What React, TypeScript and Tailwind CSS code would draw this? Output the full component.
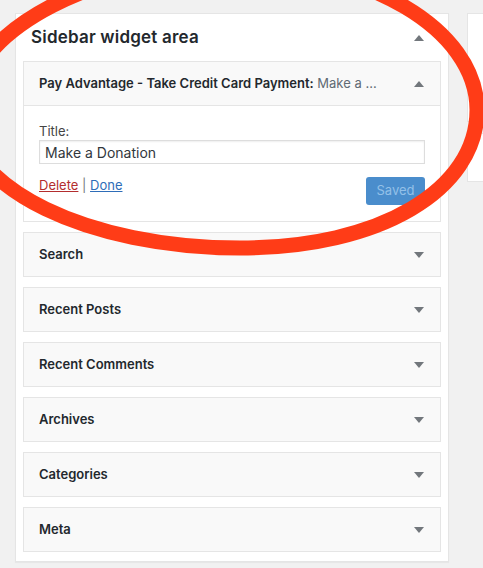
import React from 'react';

const font = { fontFamily: 'Inter, "Liberation Sans", sans-serif' };

const Arrow = ({ up }: { up?: boolean }) => (
  <svg width="10" height="6" viewBox="0 0 10 6" className="shrink-0">
    <path d={up ? 'M5 0 L10 6 L0 6 Z' : 'M0 0 L10 0 L5 6 Z'} fill="#72777c" />
  </svg>
);

const widgets = ['Search', 'Recent Posts', 'Recent Comments', 'Archives', 'Categories', 'Meta'];

const Collapsed = ({ title }: { title: string }) => (
  <div className="h-[45px] border border-[#e5e5e5] bg-[#f9f9f9] flex items-center justify-between pl-[15px] pr-[16px]">
    <span className="text-[13px] font-semibold text-[#23282d]">{title}</span>
    <Arrow />
  </div>
);

export default function App() {
  return (
    <div className="relative w-[483px] h-[568px] overflow-hidden bg-[#f1f1f1] flex gap-[18px] pt-[13px] pl-[15px]" style={font}>
      <div className="shrink-0 w-[434px] h-fit bg-white border border-[#e5e5e5] px-[7px] pb-[9px] shadow-[0_1px_1px_rgba(0,0,0,0.04)]">
        <div className="h-[47px] flex items-center justify-between pl-[8px] pr-[17px]">
          <h2 className="text-[17px] font-semibold text-[#23282d] tracking-[0.2px]">Sidebar widget area</h2>
          <Arrow up />
        </div>
        <div className="flex flex-col gap-[10px]">
          <div className="border border-[#e5e5e5] bg-white">
            <div className="h-[44px] bg-[#f9f9f9] border-b border-[#e5e5e5] flex items-center justify-between pl-[15px] pr-[16px]">
              <span className="text-[13px] font-semibold text-[#23282d] whitespace-nowrap">
                Pay Advantage - Take Credit Card Payment:<span className="font-normal text-[#606a73]"> Make a ...</span>
              </span>
              <Arrow up />
            </div>
            <div className="px-[15px] pt-[17px] pb-[16px]">
              <label className="block text-[13px] leading-[16px] text-[#444]">Title:</label>
              <input
                readOnly
                value="Make a Donation"
                className="mt-[1px] w-full h-[24px] border border-[#ddd] px-[5px] text-[14px] text-[#32373c] outline-none shadow-[inset_0_1px_2px_rgba(0,0,0,0.07)]"
                style={font}
              />
              <div className="flex justify-between items-start mt-[13px]">
                <div className="text-[13px] leading-[16px] text-[#72777c]">
                  <a className="text-[#b32d2e] underline">Delete</a> | <a className="text-[#2e6db8] underline">Done</a>
                </div>
                <button className="w-[59px] h-[28px] rounded-[3px] bg-[#4a8dcc] text-[13px] text-[#93c0e8]">Saved</button>
              </div>
            </div>
          </div>
          {widgets.map((w) => (
            <Collapsed key={w} title={w} />
          ))}
        </div>
      </div>
      <div className="shrink-0 flex flex-col gap-[11px] w-[40px]">
        <div className="h-[109px] bg-white border border-[#e5e5e5]" />
        <div className="h-[49px] bg-white border border-[#e5e5e5]" />
      </div>
      {/* hand-drawn red loop over the widget */}
      <svg className="absolute inset-0 pointer-events-none" width="483" height="568">
        <path
          d="M-35 115 C-35 24 111 -36 230 -36 C366 -36 477 29 477 110 C477 190 380 248 240 248 C88 248 -35 188 -35 115 Z"
          fill="none"
          stroke="#ff3c17"
          strokeWidth="15"
        />
      </svg>
    </div>
  );
}
